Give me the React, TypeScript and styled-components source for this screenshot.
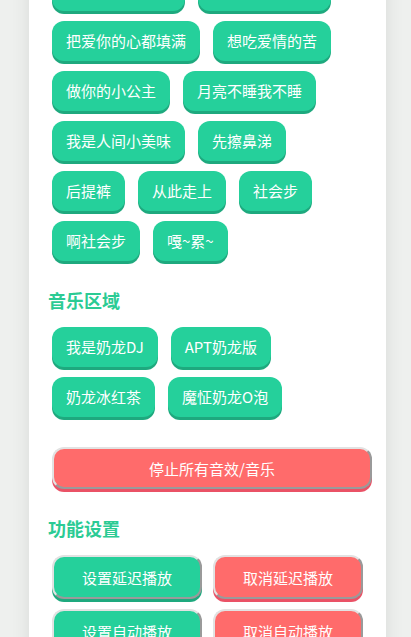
import React from 'react';
import styled, { createGlobalStyle } from 'styled-components';

const GlobalStyle = createGlobalStyle`
  html, body {
    margin: 0;
    padding: 0;
    background: #eef0ee;
    font-family: "Noto Sans CJK SC", "Noto Sans", sans-serif;
    overflow: hidden;
  }
`;

const Page = styled.div`
  width: 411px;
  height: 637px;
  overflow: hidden;
`;

const Card = styled.div`
  width: 357px;
  margin: -29px 0 0 29px;
  padding: 0 19px 40px;
  box-sizing: border-box;
  background: #fff;
  box-shadow: 0 0 18px rgba(0, 0, 0, 0.09);
`;

const Section = styled.section`
  margin-bottom: 27px;
`;

const Title = styled.h2`
  margin: 0 0 15px;
  font-size: 18px;
  line-height: 24px;
  font-weight: 700;
  color: #2bcb94;
`;

const Wrap = styled.div`
  display: flex;
  flex-wrap: wrap;
  gap: 10px 13px;
  padding: 0 4px;
`;

const Chip = styled.button`
  height: 40px;
  padding: 0 14px;
  border: none;
  border-radius: 12px;
  background: #25d09b;
  box-shadow: 0 3px 0 #1ea97e;
  color: #fff;
  font: 15px/40px "Noto Sans CJK SC", sans-serif;
  white-space: nowrap;
`;

const StopButton = styled.button`
  display: block;
  width: 320px;
  height: 42px;
  margin: 30px 0 0 4px;
  border-radius: 12px;
  border: 2px solid;
  border-color: #e2e2e2 #9a9a9a #9a9a9a #e2e2e2;
  background: #ff6b6b;
  box-shadow: 0 3px 0 #ea5266;
  color: #fff;
  font: 15px "Noto Sans CJK SC", sans-serif;
`;

const Grid = styled.div`
  display: grid;
  grid-template-columns: 150px 150px;
  gap: 10px 11px;
  padding: 0 4px;
`;

const ActionButton = styled.button<{ $danger?: boolean }>`
  height: 44px;
  border-radius: 12px;
  border: 2px solid;
  border-color: #e2e2e2 #9a9a9a #9a9a9a #e2e2e2;
  background: ${(p) => (p.$danger ? '#ff6b6b' : '#25d09b')};
  box-shadow: 0 3px 0 ${(p) => (p.$danger ? '#ea5266' : '#1ea97e')};
  color: #fff;
  font: 15px "Noto Sans CJK SC", sans-serif;
`;

const effects = [
  '你是我的小可爱',
  '我要抱抱举高高',
  '把爱你的心都填满',
  '想吃爱情的苦',
  '做你的小公主',
  '月亮不睡我不睡',
  '我是人间小美味',
  '先擦鼻涕',
  '后提裤',
  '从此走上',
  '社会步',
  '啊社会步',
  '嘎~累~',
];

const music = ['我是奶龙DJ', 'APT奶龙版', '奶龙冰红茶', '魔怔奶龙O泡'];

const actions: { label: string; danger?: boolean }[] = [
  { label: '设置延迟播放' },
  { label: '取消延迟播放', danger: true },
  { label: '设置自动播放' },
  { label: '取消自动播放', danger: true },
];

export default function App() {
  return (
    <Page>
      <GlobalStyle />
      <Card>
        <Section>
          <Wrap>
            {effects.map((e) => (
              <Chip key={e}>{e}</Chip>
            ))}
          </Wrap>
        </Section>
        <Section>
          <Title>音乐区域</Title>
          <Wrap>
            {music.map((m) => (
              <Chip key={m}>{m}</Chip>
            ))}
          </Wrap>
          <StopButton>停止所有音效/音乐</StopButton>
        </Section>
        <Section>
          <Title>功能设置</Title>
          <Grid>
            {actions.map((a) => (
              <ActionButton key={a.label} $danger={a.danger}>
                {a.label}
              </ActionButton>
            ))}
          </Grid>
        </Section>
      </Card>
    </Page>
  );
}
